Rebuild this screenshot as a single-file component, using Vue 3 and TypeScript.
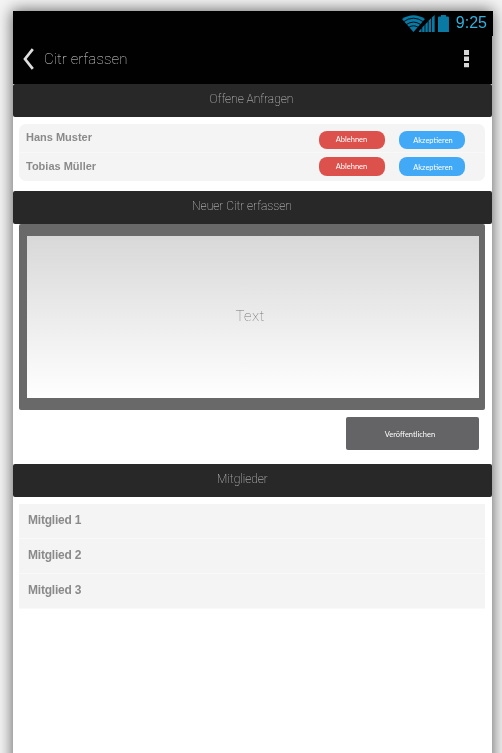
<script setup lang="ts">
import { ref } from 'vue'

interface Request {
  id: number
  name: string
}

const requests = ref<Request[]>([
  { id: 1, name: 'Hans Muster' },
  { id: 2, name: 'Tobias Müller' },
])
const members: string[] = ['Mitglied 1', 'Mitglied 2', 'Mitglied 3']
const draft = ref('')

function resolve(id: number): void {
  requests.value = requests.value.filter((r) => r.id !== id)
}
</script>

<template>
  <div class="page">
    <main class="phone">
      <div class="status">
        <svg class="wifi" width="23" height="17" viewBox="0 0 23 17">
          <path d="M0 4 Q11.5 -3.5 23 4 L11.5 17 Z" fill="#087aa3" />
          <path d="M1.800 6.600 Q11.500 -.2 21.200 6.600 M4.200 9.600 Q11.500 4.600 18.800 9.600 M6.600 12.400 Q11.500 9.200 16.400 12.400" fill="none" stroke="#000" stroke-width=".9" />
        </svg>
        <svg class="signal" width="16" height="17" viewBox="0 0 16 17">
          <path d="M0 17v-1l2.500-2.600V17zM3.200 17v-4.400l2.400-2.500V17zM6.400 17V9.200l2.400-2.500V17zM9.600 17V5.800L12 3.300V17zM12.900 17V2.400L15.700 0v17z" fill="#087aa3" />
        </svg>
        <svg class="battery" width="12" height="17" viewBox="0 0 12 17">
          <path d="M3 0h5v1.500h2.500l.5 1V17H0V2.500l.5-1H3z" fill="#087aa3" />
        </svg>
        <span class="clock">9:25</span>
      </div>

      <header class="appbar">
        <svg class="back" width="12" height="22" viewBox="0 0 12 22">
          <path d="M9.800 1.200 2 11l7.800 9.800" fill="none" stroke="#dedede" stroke-width="2.700" />
        </svg>
        <h1 class="title">Citr erfassen</h1>
        <svg class="more" width="5" height="18" viewBox="0 0 5 18">
          <path d="M0 0h5v5H0zM0 6.500h5v4.500H0zM0 13h5v4.300H0z" fill="#d6d6d6" />
        </svg>
      </header>

      <h2 class="bar pending"><span>Offene Anfragen</span></h2>
      <ul class="requests">
        <li v-for="r in requests" :key="r.id" class="request">
          <span class="name">{{ r.name }}</span>
          <button class="pill reject" @click="resolve(r.id)"><span>Ablehnen</span></button>
          <button class="pill accept" @click="resolve(r.id)"><span>Akzeptieren</span></button>
        </li>
      </ul>

      <h2 class="bar compose"><span>Neuer Citr erfassen</span></h2>
      <div class="editor">
        <input v-model="draft" class="field" type="text" placeholder="Text" />
      </div>
      <button class="publish"><span>Veröffentlichen</span></button>

      <h2 class="bar group"><span>Mitglieder</span></h2>
      <ul class="members">
        <li v-for="m in members" :key="m" class="member">{{ m }}</li>
      </ul>
    </main>
  </div>
</template>

<style>
body {
  background: #f3f3f3;
  overflow: hidden;
}
</style>

<style scoped>
* {
  box-sizing: border-box;
}
.page {
  height: 753px;
  padding: 11px 10px 0 13px;
  overflow: hidden;
}
.phone {
  width: 479px;
  height: 790px;
  background: #fff;
  box-shadow: 0 0 14px 1px rgba(0, 0, 0, 0.58);
  font-family: "Liberation Sans", Arial, sans-serif;
  will-change: transform, opacity;
  opacity: 0.999;
}
h1,
h2,
ul {
  margin: 0;
  padding: 0;
  font-weight: 100;
  list-style: none;
}
button {
  border: 0;
  padding: 0;
  font-family: Lato, sans-serif;
  color: #fff;
  display: flex;
  justify-content: center;
}
.status {
  width: 480px;
  height: 25px;
  background: #000;
  display: flex;
  align-items: flex-start;
  padding: 4px 6px 0 389px;
}
.signal {
  margin-left: -6px;
}
.battery {
  margin-left: 3px;
}
.clock {
  margin-left: 6px;
  font-size: 16px;
  line-height: 16px;
  color: #33b0de;
}
.appbar {
  height: 48px;
  background: #000;
  display: flex;
  align-items: center;
  padding: 0 23px 0 10px;
}
.back {
  margin-top: -2px;
}
.title {
  flex: 1;
  margin-left: 9px;
  margin-top: -2px;
  font: 100 15px/20px Roboto, sans-serif;
  letter-spacing: 0.1px;
  color: #d8d8d8;
}
.more {
  margin-top: -2px;
}
.bar {
  height: 33px;
  padding-top: 6px;
  background: #282828;
  border-radius: 2px;
  text-align: center;
  font: 100 12px/18px Roboto, sans-serif;
  color: #d8d8d8;
}
.pending {
  padding-right: 2px;
}
.compose {
  padding-right: 21px;
}
.group {
  padding-right: 20px;
}
.requests {
  margin: 7px 7px 10px 6px;
  height: 57px;
  border-radius: 7px;
  background: #f4f4f4;
}
.request {
  height: 28px;
  display: flex;
  align-items: flex-start;
  padding: 6px 20px 0 7px;
}
.request .pill {
  margin-top: 1px;
}
.request + .request {
  height: 29px;
  padding-top: 4px;
  border-top: 1px solid #f8f8f8;
}
.name {
  flex: 1;
  font-size: 11px;
  font-weight: 700;
  line-height: 14px;
  color: #8a8a8a;
}
.request + .request .name {
  padding-top: 2px;
}
.request + .request .pill {
  margin-top: 0;
  height: 19px;
  line-height: 19px;
}
.pill {
  width: 66px;
  height: 18px;
  border-radius: 8px;
  font-size: 7.5px;
  line-height: 17px;
}
.reject {
  padding-right: 1px;
  background: #dd514c;
}
.accept {
  margin-left: 14px;
  padding: 1px 0 0 2px;
  background: #41a9f6;
}
.editor {
  margin: 0 7px 0 6px;
  height: 186px;
  padding: 12px 6px 12px 8px;
  border-radius: 2px;
  background: #696969;
}
.field {
  display: block;
  width: 100%;
  height: 162px;
  padding: 0 6px 3px 0;
  border: 0;
  outline: 0;
  background: linear-gradient(#d8d8d8, #fff);
  text-align: center;
  font: 100 15px Roboto, sans-serif;
  letter-spacing: 0.3px;
}
.field::placeholder {
  color: #777;
  opacity: 1;
}
.publish {
  width: 133px;
  height: 33px;
  margin: 7px 13px 14px auto;
  padding-right: 5px;
  border-radius: 2px;
  background: #646467;
  font-size: 7.5px;
  line-height: 35px;
}
.members {
  margin: 7px 7px 0 6px;
  height: 105px;
  background: #f4f4f4;
}
.member {
  height: 35px;
  padding: 9px 9px 0;
  border-bottom: 1px solid #f9f9f9;
  font-size: 12px;
  font-weight: 700;
  line-height: 14px;
  letter-spacing: -0.2px;
  color: #8a8a8a;
}
</style>
